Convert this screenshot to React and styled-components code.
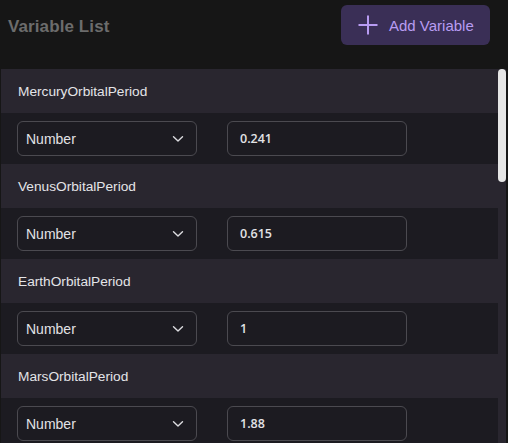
import React from "react";
import styled, { createGlobalStyle } from "styled-components";

const Global = createGlobalStyle`
  html, body { margin: 0; padding: 0; background: #161616; height: 100%; overflow: hidden; }
  #root { height: 100%; }
  * { box-sizing: border-box; }
`;

const Page = styled.div`
  height: 443px;
  display: flex;
  flex-direction: column;
  font-family: "Liberation Sans", Arial, sans-serif;
  background: #161616;
`;

const TopBar = styled.div`
  height: 69px;
  flex: none;
  display: flex;
  align-items: flex-start;
  justify-content: space-between;
  padding: 5px 18px 0 8px;
`;

const Title = styled.h1`
  margin: 0;
  margin-top: 12px;
  font-size: 17px;
  font-weight: 700;
  color: #6c6c6c;
  letter-spacing: 0.1px;
`;

const AddButton = styled.button`
  width: 149px;
  height: 40px;
  border: none;
  border-radius: 6px;
  background: #3a2f56;
  color: #b89cf2;
  font-family: "Liberation Sans", Arial, sans-serif;
  font-size: 15px;
  display: flex;
  align-items: center;
  gap: 10px;
  padding: 0 0 0 16px;
  cursor: pointer;
`;

const ListFrame = styled.div`
  position: relative;
  flex: 1;
  min-height: 0;
  margin: 0 2px 0 1px;
  background: #29262f;
  overflow: hidden;
`;

const List = styled.div`
  height: 100%;
  padding-right: 8px;
  overflow: hidden;
`;

const Thumb = styled.div`
  position: absolute;
  top: 0;
  right: 0;
  width: 8px;
  height: 113px;
  border-radius: 4px;
  background: #e6e6e6;
`;

const Item = styled.div`
  display: flex;
  flex-direction: column;
`;

const ItemHeader = styled.div`
  height: 44px;
  display: flex;
  align-items: center;
  padding-left: 17px;
  font-size: 13.7px;
  color: #e4e4e8;
`;

const ItemBody = styled.div`
  height: 51px;
  background: #1c1b21;
  display: flex;
  align-items: center;
  gap: 30px;
  padding: 0 16px;
`;

const Field = styled.div`
  width: 180px;
  height: 35px;
  border: 1px solid #4b4a50;
  border-radius: 6px;
  display: flex;
  align-items: center;
  justify-content: space-between;
  padding: 0 12px 0 8px;
  color: #e2e2e6;
  font-size: 14px;
`;

const Value = styled(Field)`
  padding-left: 12px;
  font-family: "Open Sans", "Noto Sans", sans-serif;
  font-weight: 600;
  font-size: 12.5px;
`;

const Chevron = () => (
  <svg width="12" height="8" viewBox="0 0 12 8" fill="none">
    <path d="M1.5 1.8 L6 6 L10.5 1.8" stroke="#dcdce0" strokeWidth="1.4" strokeLinecap="round" strokeLinejoin="round" />
  </svg>
);

const Plus = () => (
  <svg width="22" height="22" viewBox="0 0 22 22" fill="none">
    <path d="M11 1.5 V20.5 M1.5 11 H20.5" stroke="#b89cf2" strokeWidth="2" />
  </svg>
);

const vars = [
  ["MercuryOrbitalPeriod", "0.241"],
  ["VenusOrbitalPeriod", "0.615"],
  ["EarthOrbitalPeriod", "1"],
  ["MarsOrbitalPeriod", "1.88"],
];

export default function App() {
  return (
    <Page>
      <Global />
      <TopBar>
        <Title>Variable List</Title>
        <AddButton>
          <Plus />
          Add Variable
        </AddButton>
      </TopBar>
      <ListFrame>
        <List>
          {vars.map(([name, val]) => (
            <Item key={name}>
              <ItemHeader>{name}</ItemHeader>
              <ItemBody>
                <Field>
                  Number
                  <Chevron />
                </Field>
                <Value>{val}</Value>
              </ItemBody>
            </Item>
          ))}
        </List>
        <Thumb />
      </ListFrame>
    </Page>
  );
}
